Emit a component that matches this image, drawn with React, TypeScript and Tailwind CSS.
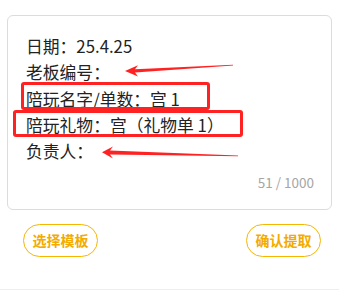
const lines = [
  "日期：25.4.25",
  "老板编号：",
  "陪玩名字/单数：宫 1",
  "陪玩礼物：宫（礼物单 1）",
  "负责人：",
];

export default function App() {
  return (
    <div
      className="relative h-[295px] w-full bg-white"
      style={{ fontFamily: '"Noto Sans CJK SC", "Noto Sans", sans-serif' }}
    >
      <div className="px-[7px] pt-[15px]">
        {/* textarea card */}
        <div className="flex h-[195px] flex-col rounded-[6px] border border-[#dcdcdc] pl-[18px] pr-[17px] pt-[17px]">
          <div className="text-[16.8px] leading-[26.25px] text-[#222]">
            {lines.map((l) => (
              <div key={l}>{l}</div>
            ))}
          </div>
          <div className="mt-[8px] text-right text-[13.5px] leading-[20px] text-[#a6a6a6]">51 / 1000</div>
        </div>
      </div>

      <div className="mt-[14px] flex items-center justify-between pl-[23px] pr-[18px]">
        <TplButton label="选择模板" />
        <TplButton label="确认提取" />
      </div>

      <div className="mt-[32px] h-px w-full bg-[#eeeeee]" />

      {/* red annotations drawn over the screenshot */}
      <div className="absolute left-[21px] top-[82px] h-[28px] w-[189px] rounded-[3px] border-[3px] border-[#f22]" />
      <div className="absolute left-[13px] top-[110px] h-[27px] w-[230px] rounded-[3px] border-[3px] border-[#f22]" />
      <svg className="pointer-events-none absolute left-0 top-0" width="339" height="295" viewBox="0 0 339 295">
        <polygon
          fill="#f22"
          points="125,71 138,65.2 135,69.3 233,64.8 233,65.5 135,72.5 138,76.6"
        />
        <polygon
          fill="#f22"
          points="102,152.3 113,146.6 110,150.4 238,155.6 238,156.3 110,154.6 113,158.4"
        />
      </svg>
    </div>
  );
}

function TplButton({ label }: { label: string }) {
  return (
    <button className="flex h-[33px] w-[75px] items-center justify-center rounded-full border border-[#f6b600] text-[14px] font-bold text-[#f3ab00]">
      {label}
    </button>
  );
}
